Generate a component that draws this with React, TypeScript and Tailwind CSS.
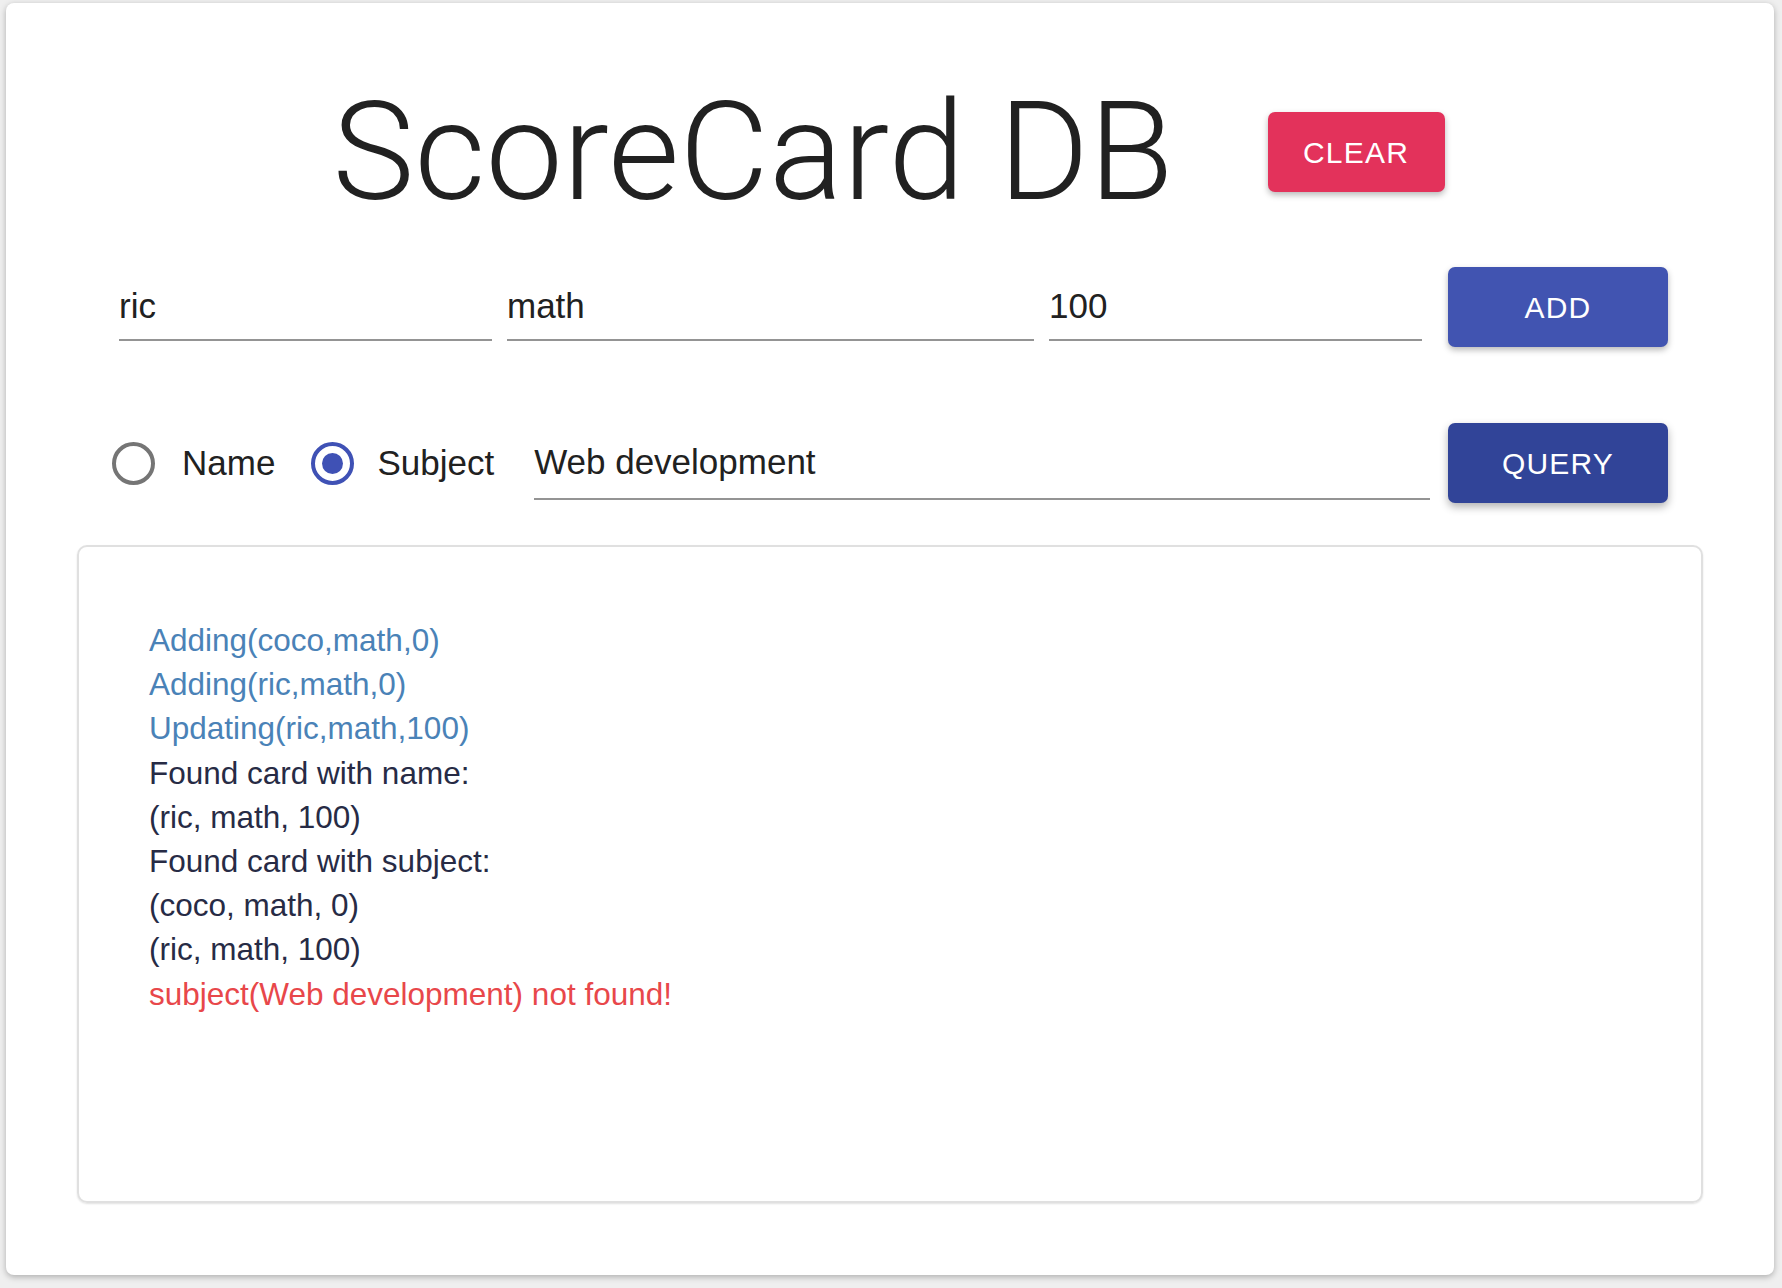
import { useState } from "react";

type LogLine = {
  text: string;
  kind: "info" | "plain" | "error";
};

const logLines: LogLine[] = [
  { text: "Adding(coco,math,0)", kind: "info" },
  { text: "Adding(ric,math,0)", kind: "info" },
  { text: "Updating(ric,math,100)", kind: "info" },
  { text: "Found card with name:", kind: "plain" },
  { text: "(ric, math, 100)", kind: "plain" },
  { text: "Found card with subject:", kind: "plain" },
  { text: "(coco, math, 0)", kind: "plain" },
  { text: "(ric, math, 100)", kind: "plain" },
  { text: "subject(Web development) not found!", kind: "error" },
];

const colorFor = (kind: LogLine["kind"]) => {
  if (kind === "info") return "text-[#4a82b7]";
  if (kind === "error") return "text-[#e8474a]";
  return "text-[#272b45]";
};

const Field = ({
  value,
  onChange,
  className,
}: {
  value: string;
  onChange: (v: string) => void;
  className: string;
}) => (
  <div className={`border-b-2 border-[#949494] ${className}`}>
    <input
      value={value}
      onChange={(e) => onChange(e.target.value)}
      className="w-full h-[40px] leading-[40px] text-[35px] text-[#212121] bg-transparent outline-none"
    />
  </div>
);

const Radio = ({ checked, onClick }: { checked: boolean; onClick: () => void }) => (
  <div
    onClick={onClick}
    className={`w-[43px] h-[43px] rounded-full border-[4px] flex items-center justify-center cursor-pointer ${
      checked ? "border-[#3f51b5]" : "border-[#757575]"
    }`}
  >
    {checked && <div className="w-[21px] h-[21px] rounded-full bg-[#3f51b5]" />}
  </div>
);

export default function App() {
  const [name, setName] = useState("ric");
  const [subject, setSubject] = useState("math");
  const [score, setScore] = useState("100");
  const [mode, setMode] = useState<"name" | "subject">("subject");
  const [query, setQuery] = useState("Web development");

  return (
    <div className="min-h-screen bg-[#efefef] pt-[3px] pl-[6px] font-['Liberation_Sans',Arial,sans-serif]">
      <div className="w-[1768px] h-[1272px] bg-white rounded-[8px] shadow-[0_2px_6px_rgba(0,0,0,0.28)] flex flex-col">
        {/* title */}
        <div className="mt-[83px] h-[132px] flex justify-center items-center">
          <h1 className="font-['Roboto',sans-serif] font-light text-[138px] leading-none text-[#212121]">
            ScoreCard DB
          </h1>
          <button className="ml-[94px] mr-[3px] w-[177px] h-[80px] rounded-[7px] bg-[#e3325b] text-white text-[30px] tracking-[1.2px] shadow-[0_3px_6px_rgba(0,0,0,0.28)]">
            CLEAR
          </button>
        </div>

        {/* add row */}
        <div className="mt-[49px] h-[80px] flex items-end pl-[113px] pr-[106px]">
          <Field value={name} onChange={setName} className="w-[373px] pb-[13px] mb-[6px]" />
          <Field value={subject} onChange={setSubject} className="w-[527px] ml-[15px] pb-[13px] mb-[6px]" />
          <Field value={score} onChange={setScore} className="w-[373px] ml-[15px] pb-[13px] mb-[6px]" />
          <button className="ml-[26px] w-[220px] h-[80px] rounded-[7px] bg-[#4154b1] text-white text-[30px] tracking-[1.2px] shadow-[0_3px_6px_rgba(0,0,0,0.28)]">
            ADD
          </button>
        </div>

        {/* query row */}
        <div className="mt-[76px] h-[80px] flex items-center pl-[106px] pr-[106px]">
          <Radio checked={mode === "name"} onClick={() => setMode("name")} />
          <span className="ml-[27px] text-[35px] text-[#212121]">Name</span>
          <div className="ml-[36px]">
            <Radio checked={mode === "subject"} onClick={() => setMode("subject")} />
          </div>
          <span className="ml-[23px] text-[35px] text-[#212121]">Subject</span>
          <Field value={query} onChange={setQuery} className="flex-1 ml-[40px] mt-[16px] pb-[16px]" />
          <button className="ml-[18px] w-[220px] h-[80px] rounded-[7px] bg-[#314498] text-white text-[30px] tracking-[1.2px] shadow-[0_4px_8px_rgba(0,0,0,0.3)]">
            QUERY
          </button>
        </div>

        {/* output log */}
        <div className="mt-[42px] mx-[71px] h-[658px] rounded-[10px] border-2 border-[#e0e0e0] shadow-[0_1px_2px_rgba(0,0,0,0.12)] pl-[70px] pt-[71px]">
          {logLines.map((line, i) => (
            <div key={i} className={`text-[31.5px] leading-[44.2px] ${colorFor(line.kind)}`}>
              {line.text}
            </div>
          ))}
        </div>
      </div>
    </div>
  );
}
